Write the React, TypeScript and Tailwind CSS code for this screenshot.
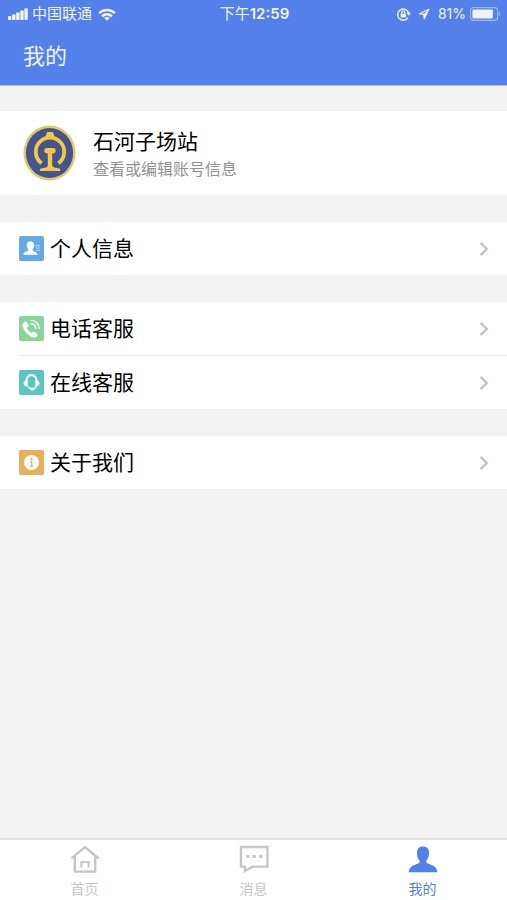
import { useState, type ReactNode } from "react";

function SignalIcon() {
  return (
    <svg viewBox="0 0 20 12" className="w-5 h-3" fill="currentColor" aria-hidden="true">
      <rect x="0" y="8" width="3.4" height="4" rx="0.8" />
      <rect x="4.1" y="6.3" width="3.4" height="5.7" rx="0.8" />
      <rect x="8.2" y="4.4" width="3.4" height="7.6" rx="0.8" />
      <rect x="12.3" y="2.4" width="3.4" height="9.6" rx="0.8" />
      <rect x="16.4" y="0.2" width="3.4" height="11.8" rx="0.8" />
    </svg>
  );
}

function WifiIcon() {
  return (
    <svg viewBox="0 0 18 13" className="w-[18px] h-[13px]" fill="none" stroke="currentColor" strokeWidth="2.4" aria-hidden="true">
      <path d="M1.2 5.2a11 11 0 0 1 15.6 0" />
      <path d="M4 8.4a7 7 0 0 1 10 0" />
      <path d="M9 12.8 6.2 10a3.9 3.9 0 0 1 5.6 0Z" fill="currentColor" stroke="none" />
    </svg>
  );
}

function RotationLockIcon() {
  return (
    <svg viewBox="0 0 16 14" className="w-4 h-[14px]" fill="none" stroke="currentColor" aria-hidden="true">
      <path d="M12 10.6A5.6 5.6 0 1 1 12.6 6" strokeWidth="1.4" />
      <path d="M10.4 5.8h4.6l-2.2 3Z" fill="currentColor" stroke="none" />
      <rect x="4.6" y="6.4" width="5.4" height="4" rx="0.5" fill="currentColor" stroke="none" />
      <path d="M5.8 6.6V5.3a1.5 1.5 0 0 1 3 0v1.3" strokeWidth="1.2" />
    </svg>
  );
}

function LocationIcon() {
  return (
    <svg viewBox="0 0 12 12" className="w-3 h-3" aria-hidden="true">
      <path d="M10.8 1.2 1.4 5.7l4.3.6.6 4.4Z" fill="none" stroke="currentColor" strokeWidth="1.2" strokeLinejoin="round" />
      <path d="M10.8 1.2 5.7 6.3l.6 4.4Z" fill="currentColor" />
    </svg>
  );
}

function BatteryIcon() {
  return (
    <svg viewBox="0 0 31 14" className="w-[31px] h-[14px]" aria-hidden="true">
      <rect x="0.6" y="0.6" width="27" height="12.8" rx="3" fill="none" stroke="currentColor" strokeOpacity="0.5" strokeWidth="1.1" />
      <rect x="2.4" y="2.4" width="20.5" height="9.2" rx="1.4" fill="currentColor" />
      <path d="M28.8 4.8c1.9.7 1.9 3.7 0 4.4Z" fill="currentColor" fillOpacity="0.5" />
    </svg>
  );
}

function RailwayLogo() {
  return (
    <svg viewBox="0 0 54 56" className="w-[54px] h-14 shrink-0" aria-hidden="true">
      <ellipse cx="26.5" cy="28" rx="26" ry="27.6" fill="#dccb68" />
      <ellipse cx="26.5" cy="28" rx="23.6" ry="25" fill="#475390" />
      <path d="M18.6 38.2a14.2 14.2 0 1 1 16.8 0" fill="none" stroke="#efcb3f" strokeWidth="3.8" />
      <path d="M22.4 12.4 23.6 8q.3-1 1.4-1h4q1.100 0 1.400 1l1.200 4.400Z" fill="#efcb3f" />
      <path
        d="M23.4 23h7.200q2 0 2 2v1.400q0 1.300-1.400 1.700l-2 .6v11.300q0 2.200 2 2.600l5 .8q1 .2 1 1.200v1.400H16.800v-1.400q0-1 1-1.200l5-.8q2-.4 2-2.600V28.700l-2-.6q-1.400-.4-1.400-1.700V25q0-2 2-2Z"
        fill="#efcb3f"
      />
    </svg>
  );
}

function ProfileIcon() {
  return (
    <svg viewBox="0 0 25 25" className="w-[25px] h-[25px]" aria-hidden="true">
      <rect width="25" height="25" rx="2" fill="#65a8ea" />
      <path
        d="M11.4 5.2c2.5 0 3.9 1.7 3.8 4.1-.1 1.8-.7 3-1.6 3.9v1.3c.8 1 4.6 1.2 5 4.3H4.2c.4-3.1 4.2-3.3 5-4.3v-1.3c-.9-.9-1.5-2.1-1.6-3.9-.1-2.4 1.3-4.1 3.8-4.1Z"
        fill="#fff"
      />
      <path d="M16.6 9.6h4.2M17 12h3.8M17.6 14.4h3.2" stroke="#fff" strokeOpacity="0.5" strokeWidth="1.1" />
    </svg>
  );
}

function PhoneIcon() {
  return (
    <svg viewBox="0 0 25 25" className="w-[25px] h-[25px]" aria-hidden="true">
      <rect width="25" height="25" rx="2" fill="#8ad69a" />
      <path
        d="M6 5.6c.8-.4 1.5-.1 1.9.6l1.5 2.8c.4.8.2 1.5-.5 2l-1.100.8c.8 2 2.500 4 4.600 5.100l1.200-.9c.6-.5 1.300-.5 1.900 0l2.600 2c.7.6.7 1.200.2 1.900-1.400 1.900-3.600 2-5.800 1-4-1.800-7.300-5.700-8.700-9.800-.8-2.300.2-4.500 2.200-5.500Z"
        fill="#fff"
      />
      <path d="M12.2 4.4c4.4.2 7.7 3.5 7.9 7.8M12 7.8c2.8.1 4.6 2 4.8 4.7" fill="none" stroke="#fff" strokeWidth="1.4" strokeLinecap="round" />
    </svg>
  );
}

function HeadsetIcon() {
  return (
    <svg viewBox="0 0 25 25" className="w-[25px] h-[25px]" aria-hidden="true">
      <rect width="25" height="25" rx="2" fill="#5bc5c2" />
      <path d="M7.4 12.2C7 7.6 9.2 5 12.5 5s5.500 2.600 5.100 7.200" fill="none" stroke="#fff" strokeWidth="1.8" />
      <path d="M8.8 10.2v6.2c-2.600.2-4.300-1-4.300-3.200 0-2 1.600-3.100 4.300-3ZM16.200 10.200v6.200c2.600.2 4.300-1 4.300-3.200 0-2-1.600-3.100-4.300-3Z" fill="#fff" />
      <path d="M9 16.2c.6 1.400 1.600 2.200 3 2.600M17.4 15.800c-.4 1.800-1.500 2.900-3.400 3.200" fill="none" stroke="#fff" strokeWidth="1.2" />
      <rect x="11" y="17.6" width="4.2" height="2.8" rx="1.3" fill="#fff" />
    </svg>
  );
}

function AboutIcon() {
  return (
    <svg viewBox="0 0 25 25" className="w-[25px] h-[25px]" aria-hidden="true">
      <rect width="25" height="25" rx="2" fill="#e6b05c" />
      <circle cx="12.5" cy="12.5" r="7.6" fill="#fff" />
      <circle cx="12.5" cy="9.2" r="1.1" fill="#e6b05c" />
      <path d="M11.2 11.6h1.5v4.6M11 16.2h3.2" fill="none" stroke="#e6b05c" strokeWidth="1.2" />
    </svg>
  );
}

function ArrowIcon() {
  return (
    <svg viewBox="0 0 10 16" className="w-[10px] h-4" fill="none" stroke="#c4c4c6" strokeWidth="2.4" aria-hidden="true">
      <path d="M1.6 1.8 7.8 8l-6.2 6.2" />
    </svg>
  );
}

function HomeIcon() {
  return (
    <svg viewBox="0 0 30 28" className="w-[30px] h-7" fill="none" stroke="currentColor" strokeWidth="2.4" aria-hidden="true">
      <path d="M1.4 13.4 15 2l13.6 11.4" />
      <path d="M4.8 11v15.6h20.4V11" />
      <path d="M11.4 22.6V17h7.2v5.6" strokeWidth="2" />
    </svg>
  );
}

function MessageIcon() {
  return (
    <svg viewBox="0 0 30 28" className="w-[30px] h-7" fill="none" stroke="currentColor" strokeWidth="2.4" aria-hidden="true">
      <path d="M2 2h26.4v19.6H13.4L6 26v-4.4H2Z" />
      <path d="M7.4 11.6h3M13.8 11.6h3M20.2 11.6h3" strokeWidth="3" />
    </svg>
  );
}

function MineIcon() {
  return (
    <svg viewBox="0 0 30 28" className="w-[30px] h-7" fill="currentColor" aria-hidden="true">
      <path d="M15 1.6c4 0 6.2 2.600 6 6.800-.1 3.200-1.100 5.500-2.600 7.200v2c1.400 1.900 10.600 2.200 11 9.600H.6c.4-7.400 9.600-7.700 11-9.600v-2C10.1 13.900 9.100 11.600 9 8.400 8.800 4.200 11 1.600 15 1.600Z" />
    </svg>
  );
}

function MenuRow({ icon, label }: { icon: ReactNode; label: string }) {
  return (
    <button type="button" className="w-full h-[53px] pl-[19px] pr-[18px] flex items-center text-left active:bg-gray-50">
      {icon}
      <span className="ml-[6px] flex-1 text-[21px] leading-7 text-black">{label}</span>
      <ArrowIcon />
    </button>
  );
}

const tabs = [
  { id: "home", label: "首页", icon: <HomeIcon /> },
  { id: "message", label: "消息", icon: <MessageIcon /> },
  { id: "mine", label: "我的", icon: <MineIcon /> },
];

export default function App() {
  const [active, setActive] = useState("mine");

  return (
    <div className="min-h-dvh flex flex-col bg-[#f2f2f2] font-[Inter,'Noto_Sans_CJK_SC',sans-serif]">
      <header className="bg-[#5381e9] text-[#eef4ff] border-b border-[#a9c0f2]">
        <div className="h-7 pl-2 pr-[6px] grid grid-cols-[1fr_auto_1fr] items-center text-[15px] leading-5">
          <div className="flex items-center">
            <SignalIcon />
            <span className="ml-1 mr-[6px]">中国联通</span>
            <WifiIcon />
          </div>
          <span>下午<span className="font-semibold">12:59</span></span>
          <div className="flex items-center justify-end">
            <RotationLockIcon />
            <span className="ml-[6px] mr-2"><LocationIcon /></span>
            <span className="mr-1 text-sm">81%</span>
            <BatteryIcon />
          </div>
        </div>
        <h1 className="h-[57px] px-[23px] pb-[2px] flex items-center text-[22px] leading-8">我的</h1>
      </header>

      <main className="flex-1 pt-[25px] flex flex-col gap-[27px]">
        <button type="button" className="w-full h-[84px] bg-white px-[23px] flex items-center text-left active:bg-gray-50">
          <RailwayLogo />
          <span className="ml-4 pt-1 flex flex-col">
            <span className="text-[21px] leading-7 text-black">石河子场站</span>
            <span className="text-base leading-[26px] text-[#929292]">查看或编辑账号信息</span>
          </span>
        </button>

        <section className="bg-white">
          <MenuRow icon={<ProfileIcon />} label="个人信息" />
        </section>

        <section className="bg-white">
          <MenuRow icon={<PhoneIcon />} label="电话客服" />
          <div className="ml-5 h-px bg-[#ececec]" />
          <MenuRow icon={<HeadsetIcon />} label="在线客服" />
        </section>

        <section className="bg-white">
          <MenuRow icon={<AboutIcon />} label="关于我们" />
        </section>
      </main>

      <nav className="sticky bottom-0 h-[62px] bg-white border-t-2 border-[#e1e1e1] grid grid-cols-3">
        {tabs.map((t) => (
          <button
            key={t.id}
            type="button"
            onClick={() => setActive(t.id)}
            className={`pt-[5px] flex flex-col items-center ${active === t.id ? "text-[#5180e8]" : "text-[#c6c6c6]"}`}
          >
            {t.icon}
            <span className="mt-[6px] text-sm leading-5">{t.label}</span>
          </button>
        ))}
      </nav>
    </div>
  );
}
